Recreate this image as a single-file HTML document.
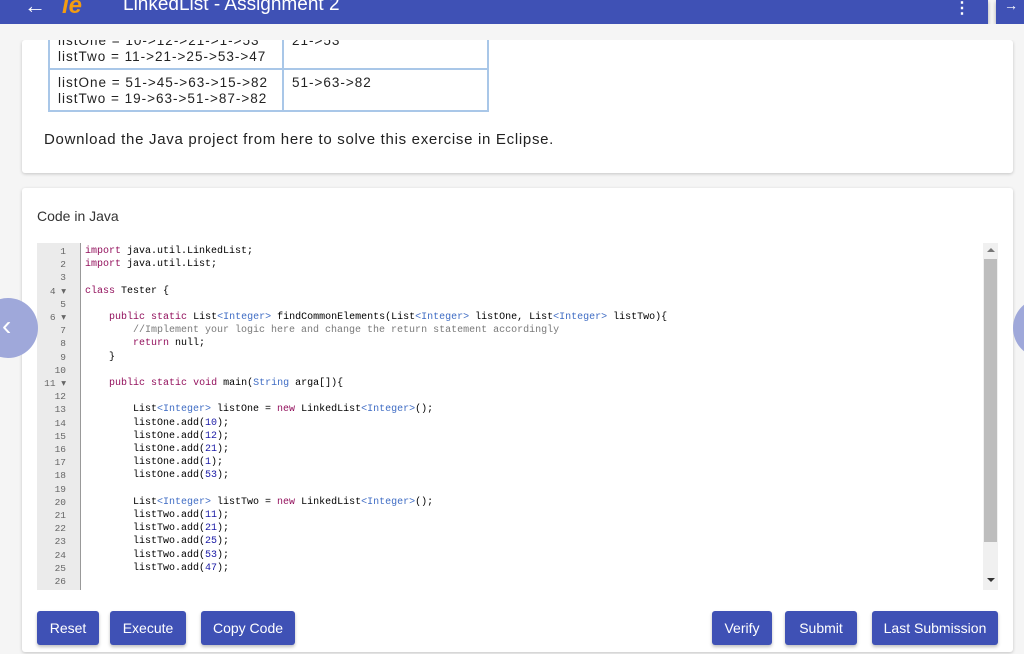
<!DOCTYPE html>
<html><head><meta charset="utf-8"><style>
*{margin:0;padding:0;box-sizing:border-box}
body{width:1024px;height:654px;overflow:hidden;background:#f5f5f5;font-family:"Liberation Sans",sans-serif;position:relative}
.hdr{position:absolute;left:0;top:0;width:988px;height:24px;background:#3f51b5;box-shadow:0 2px 4px rgba(0,0,0,.3);color:#fff}
.hdr2{position:absolute;left:996px;top:0;width:28px;height:24px;background:#3f51b5;box-shadow:0 2px 4px rgba(0,0,0,.3)}
.card{position:absolute;left:22px;width:991px;background:#fff;box-shadow:0 1px 3px rgba(0,0,0,.2);border-radius:3px}
table{position:absolute;left:26px;border-collapse:collapse;font-size:13.5px;letter-spacing:1px;color:#222}
td{border:2px solid #a9c7e8;vertical-align:top;padding:3px 8px;line-height:16px}
.ed{position:absolute;left:15px;top:55px;width:961px;height:347px;background:#fff}
.gut{position:absolute;left:0;top:0;width:44px;height:347px;background:#ebebeb;border-right:1px solid #999}
.ln{font-family:"Liberation Mono",monospace;font-size:9.5px;color:#666;text-align:right;position:absolute;right:14px;top:2px;line-height:13.2px}
.code{position:absolute;left:48px;top:2px;font-family:"Liberation Mono",monospace;font-size:10px;line-height:13.2px;white-space:pre;color:#000}
.k{color:#93115d}.t{color:#3f6cc4}.c{color:#7a7a7a}.n{color:#1a1aa6}
.sb{position:absolute;left:946px;top:0;width:15px;height:347px;background:#f0f0f0}
.btn{position:absolute;top:423px;height:34px;background:#3f51b5;color:#fff;font-size:14px;border-radius:3px;text-align:center;line-height:34px;box-shadow:0 2px 3px rgba(0,0,0,.25)}
.circ{position:absolute;width:60px;height:60px;border-radius:50%;background:#9fa8da}
</style></head><body>
<div class="hdr">
<span style="position:absolute;left:24px;top:-7px;font-size:22px">←</span>
<span style="position:absolute;left:62px;top:-8px;font-size:24px;font-style:italic;font-weight:bold;color:#f39c12">le</span>
<span style="position:absolute;left:123px;top:-6px;font-size:19px">LinkedList - Assignment 2</span>
<span style="position:absolute;left:954px;top:-2px;font-size:16px;font-weight:bold">⋮</span>
</div>
<div class="hdr2"><span style="position:absolute;left:8px;top:-3px;color:#fff;font-size:14px">→</span></div>
<div class="card" style="top:40px;height:133px">
<table style="top:-12px"><tr><td style="width:234px;height:40px">listOne = 10-&gt;12-&gt;21-&gt;1-&gt;53<br>listTwo = 11-&gt;21-&gt;25-&gt;53-&gt;47</td><td style="width:205px">21-&gt;53</td></tr>
<tr><td style="height:42px;padding-top:5px">listOne = 51-&gt;45-&gt;63-&gt;15-&gt;82<br>listTwo = 19-&gt;63-&gt;51-&gt;87-&gt;82</td><td style="padding-top:5px">51-&gt;63-&gt;82</td></tr></table>
<div style="position:absolute;left:22px;top:91px;font-size:15px;letter-spacing:0.7px;color:#222">Download the Java project from here to solve this exercise in Eclipse.</div>
</div>
<div style="position:absolute;left:0;top:24px;width:1024px;height:16px;background:#f5f5f5"></div>
<div class="card" style="top:188px;height:464px">
<div style="position:absolute;left:15px;top:20px;font-size:14px;color:#333">Code in Java</div>
<div class="ed">
<div class="gut"><div class="ln">1<br>2<br>3<br>4 ▾<br>5<br>6 ▾<br>7<br>8<br>9<br>10<br>11 ▾<br>12<br>13<br>14<br>15<br>16<br>17<br>18<br>19<br>20<br>21<br>22<br>23<br>24<br>25<br>26</div></div>
<div class="code"><span class="k">import</span> java.util.LinkedList;
<span class="k">import</span> java.util.List;

<span class="k">class</span> Tester {

    <span class="k">public</span> <span class="k">static</span> List<span class="t">&lt;Integer&gt;</span> findCommonElements(List<span class="t">&lt;Integer&gt;</span> listOne, List<span class="t">&lt;Integer&gt;</span> listTwo){
        <span class="c">//Implement your logic here and change the return statement accordingly</span>
        <span class="k">return</span> null;
    }

    <span class="k">public</span> <span class="k">static</span> <span class="k">void</span> main(<span class="t">String</span> arga[]){

        List<span class="t">&lt;Integer&gt;</span> listOne = <span class="k">new</span> LinkedList<span class="t">&lt;Integer&gt;</span>();
        listOne.add(<span class="n">10</span>);
        listOne.add(<span class="n">12</span>);
        listOne.add(<span class="n">21</span>);
        listOne.add(<span class="n">1</span>);
        listOne.add(<span class="n">53</span>);

        List<span class="t">&lt;Integer&gt;</span> listTwo = <span class="k">new</span> LinkedList<span class="t">&lt;Integer&gt;</span>();
        listTwo.add(<span class="n">11</span>);
        listTwo.add(<span class="n">21</span>);
        listTwo.add(<span class="n">25</span>);
        listTwo.add(<span class="n">53</span>);
        listTwo.add(<span class="n">47</span>);
</div>
<div class="sb"><div style="position:absolute;left:1px;top:16px;width:13px;height:283px;background:#bdbdbd"></div>
<div style="position:absolute;left:4px;top:5px;border:4px solid transparent;border-bottom-color:#777;border-top:0"></div>
<div style="position:absolute;left:4px;top:335px;border:4px solid transparent;border-top-color:#333;border-bottom:0"></div></div>
</div>
<div class="btn" style="left:15px;width:62px">Reset</div>
<div class="btn" style="left:88px;width:76px">Execute</div>
<div class="btn" style="left:179px;width:94px">Copy Code</div>
<div class="btn" style="left:690px;width:60px">Verify</div>
<div class="btn" style="left:763px;width:72px">Submit</div>
<div class="btn" style="left:850px;width:126px">Last Submission</div>
</div>
<div class="circ" style="left:-22px;top:298px"><span style="position:absolute;left:24px;top:12px;color:#fff;font-size:28px">‹</span></div>
<div class="circ" style="left:1013px;top:298px"></div>
</body></html>
